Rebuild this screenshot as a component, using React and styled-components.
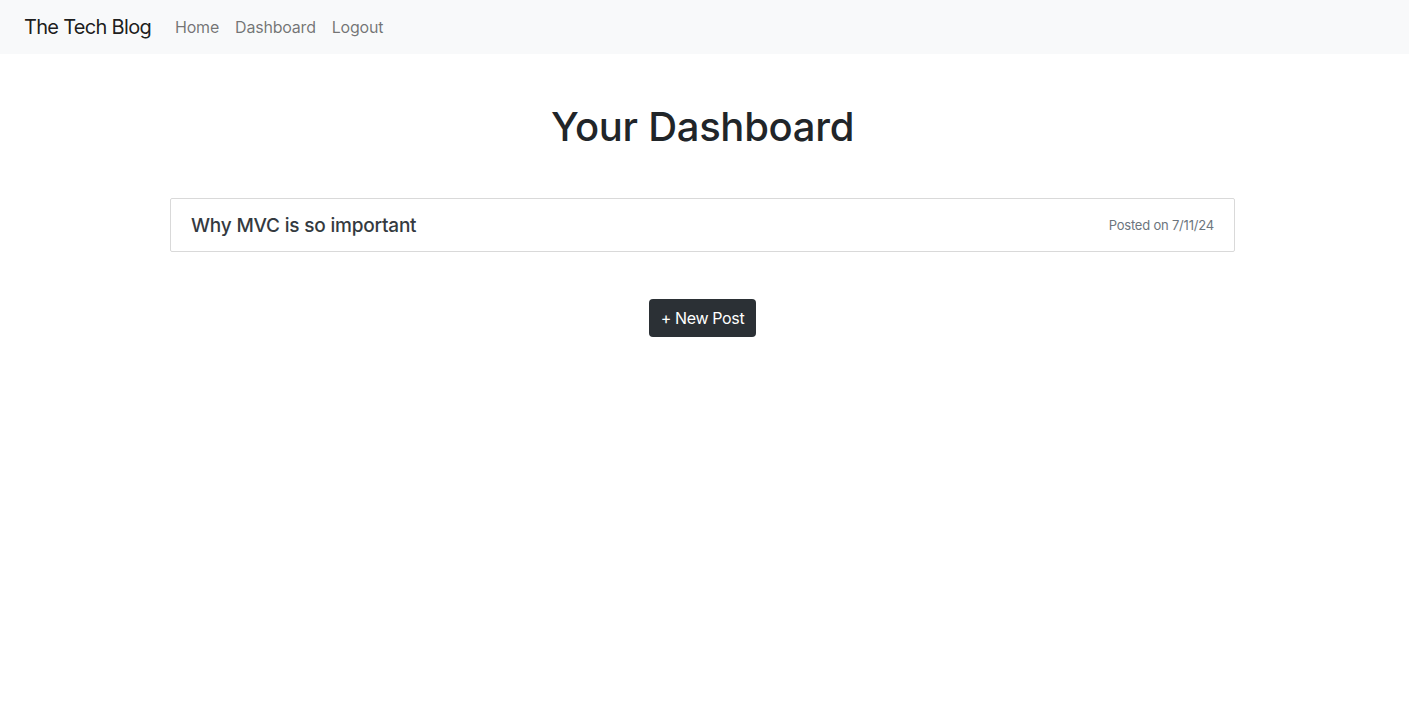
import React from 'react'
import styled, { createGlobalStyle } from 'styled-components'

const GlobalStyle = createGlobalStyle`
  body {
    margin: 0;
    font-family: Inter, "Noto Sans", "Liberation Sans", sans-serif;
    color: #212529;
    background: #fff;
  }
`

const NavBar = styled.nav`
  height: 54px;
  background: #f8f9fa;
  display: flex;
  align-items: center;
  padding: 0 24px 1px;
  box-sizing: border-box;
`

const Brand = styled.a`
  font-size: 20px;
  color: rgba(0, 0, 0, 0.9);
  text-decoration: none;
  margin-right: 16px;
  letter-spacing: -0.7px;
`

const NavLinks = styled.ul`
  display: flex;
  list-style: none;
  margin: 0;
  padding: 0;
`

const NavLink = styled.a`
  display: block;
  padding: 8px 8px;
  font-size: 16px;
  color: rgba(0, 0, 0, 0.55);
  text-decoration: none;
  letter-spacing: -0.2px;
`

const Main = styled.main`
  width: 1065px;
  padding-right: 4px;
  margin: 0 auto;
  display: flex;
  flex-direction: column;
  align-items: center;
`

const Title = styled.h1`
  font-size: 40px;
  font-weight: 500;
  margin: 49px 0 47px;
  line-height: 1.2;
  letter-spacing: -0.3px;
`

const PostCard = styled.div`
  width: 100%;
  box-sizing: border-box;
  border: 1px solid rgba(0, 0, 0, 0.15);
  border-radius: 2px;
  height: 54px;
  padding: 0 20px;
  display: flex;
  align-items: center;
  justify-content: space-between;
`

const PostTitle = styled.a`
  font-size: 19px;
  font-weight: 500;
  color: #343a40;
  text-decoration: none;
  letter-spacing: -0.2px;
`

const PostDate = styled.span`
  font-size: 13px;
  color: #6c757d;
  letter-spacing: -0.2px;
`

const Button = styled.button`
  margin-top: 47px;
  height: 38px;
  padding: 0 12px;
  border: none;
  border-radius: 4px;
  background: #2b3035;
  color: #fff;
  font-family: inherit;
  font-size: 16px;
  letter-spacing: -0.35px;
  cursor: pointer;
`

export default function App() {
  return (
    <>
      <GlobalStyle />
      <NavBar>
        <Brand href="#">The Tech Blog</Brand>
        <NavLinks>
          <li><NavLink href="#">Home</NavLink></li>
          <li><NavLink href="#">Dashboard</NavLink></li>
          <li><NavLink href="#">Logout</NavLink></li>
        </NavLinks>
      </NavBar>
      <Main>
        <Title>Your Dashboard</Title>
        <PostCard>
          <PostTitle href="#">Why MVC is so important</PostTitle>
          <PostDate>Posted on 7/11/24</PostDate>
        </PostCard>
        <Button>+ New Post</Button>
      </Main>
    </>
  )
}
